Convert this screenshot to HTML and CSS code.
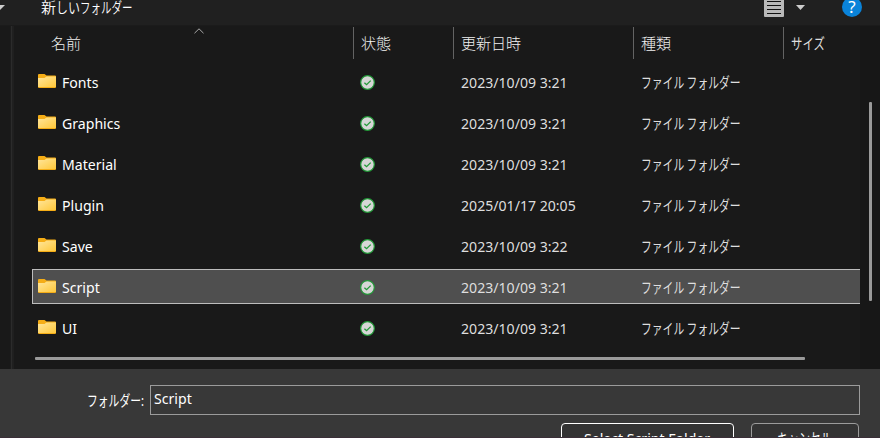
FILE: index.html
```html
<!DOCTYPE html>
<html lang="ja">
<head>
<meta charset="utf-8">
<title>フォルダー</title>
<link rel="stylesheet" href="styles.css">
</head>
<body>
<svg width="0" height="0" class="defs">
  <defs>
    <linearGradient id="fold" x1="0" y1="0" x2="1" y2="1"><stop offset="0" stop-color="#ffe69c"/><stop offset="1" stop-color="#ffc83a"/></linearGradient>
    <symbol id="folder" viewBox="0 0 18 14">
      <path d="M0 1Q0 0 1 0H6.5L8.5 1.5H17Q18 1.5 18 2.5V13Q18 14 17 14H1Q0 14 0 13Z" fill="#f5ad16"/>
      <path d="M0 4H6.5L8.5 2.4H18V13H0Z" fill="url(#fold)"/>
    </symbol>
    <symbol id="check" viewBox="0 0 15 15">
      <circle cx="7.5" cy="7.5" r="6.8" fill="#d6d6d6" stroke="#229a38" stroke-width="1.2"/>
      <path d="M4.4 7.7L6.6 9.7L10.7 5.6" fill="none" stroke="#229a38" stroke-width="1.3"/>
    </symbol>
  </defs>
</svg>
<div class="dialog">
  <header class="toolbar">
    <svg class="organize" width="5" height="5" viewBox="0 0 5 5"><path d="M-4 0H5L0 5Z" fill="#ccc"/></svg>
    <div class="new"><span>新</span><span class="t hira">しい</span><span class="t kana">フォルダー</span></div>
    <svg class="view" width="20" height="17" viewBox="0 0 20 17"><path d="M0 0H20V16Q20 17 19 17H1Q0 17 0 16Z" fill="#b9b9b9"/><path d="M3 1.5H17M3 5.5H17M3 9.5H17M3 13.5H17" stroke="#111"/></svg>
    <svg class="drop" width="9" height="5" viewBox="0 0 9 5"><path d="M0 0H9L4.5 5Z" fill="#ccc"/></svg>
    <div class="help"><span>?</span></div>
  </header>
  <main class="browser">
    <div class="splitter"></div>
    <div class="list">
      <div class="head">
        <div class="col name"><span>名前</span><svg class="sort" width="10" height="6" viewBox="0 0 10 6"><path d="M.5 5.2L5 .8L9.5 5.2" fill="none" stroke="#aaa"/></svg></div>
        <div class="col state"><span>状態</span></div>
        <div class="col date"><span>更新日時</span></div>
        <div class="col kind"><span>種類</span></div>
        <div class="col size"><span class="t size-label">サイズ</span></div>
      </div>
      <div class="rows">
        <div class="row"><svg class="folder"><use href="#folder"/></svg><span class="label"><span class="t latin">Fonts</span></span><svg class="check"><use href="#check"/></svg><span class="when"><span class="t latin">2023/10/09 3:21</span></span><span class="t type">ファイル フォルダー</span></div>
        <div class="row"><svg class="folder"><use href="#folder"/></svg><span class="label"><span class="t latin">Graphics</span></span><svg class="check"><use href="#check"/></svg><span class="when"><span class="t latin">2023/10/09 3:21</span></span><span class="t type">ファイル フォルダー</span></div>
        <div class="row"><svg class="folder"><use href="#folder"/></svg><span class="label"><span class="t latin">Material</span></span><svg class="check"><use href="#check"/></svg><span class="when"><span class="t latin">2023/10/09 3:21</span></span><span class="t type">ファイル フォルダー</span></div>
        <div class="row"><svg class="folder"><use href="#folder"/></svg><span class="label"><span class="t latin">Plugin</span></span><svg class="check"><use href="#check"/></svg><span class="when"><span class="t latin">2025/01/17 20:05</span></span><span class="t type">ファイル フォルダー</span></div>
        <div class="row"><svg class="folder"><use href="#folder"/></svg><span class="label"><span class="t latin">Save</span></span><svg class="check"><use href="#check"/></svg><span class="when"><span class="t latin">2023/10/09 3:22</span></span><span class="t type">ファイル フォルダー</span></div>
        <div class="row selected"><svg class="folder"><use href="#folder"/></svg><span class="label"><span class="t latin">Script</span></span><svg class="check"><use href="#check"/></svg><span class="when"><span class="t latin">2023/10/09 3:21</span></span><span class="t type">ファイル フォルダー</span></div>
        <div class="row"><svg class="folder"><use href="#folder"/></svg><span class="label"><span class="t latin">UI</span></span><svg class="check"><use href="#check"/></svg><span class="when"><span class="t latin">2023/10/09 3:21</span></span><span class="t type">ファイル フォルダー</span></div>
      </div>
      <div class="hscroll"><div class="thumb"></div></div>
    </div>
    <div class="vscroll"><div class="thumb"></div></div>
  </main>
  <footer class="footer">
    <div class="field"><label><span class="t kana">フォルダー:</span></label><div class="input"><span class="t latin">Script</span></div></div>
    <div class="buttons">
      <div class="btn primary"><span class="t select">Select Script Folder</span></div>
      <div class="btn"><span class="t cancel">キャンセル</span></div>
    </div>
  </footer>
</div>
</body>
</html>
```
FILE: styles.css
```css
* { box-sizing: border-box; }
body { margin: 0; overflow: hidden; background: #383838; color: #fff; font: 15px/20px "Noto Sans", "Noto Sans CJK JP", sans-serif; }
svg { display: block; flex: none; }
.defs { position: absolute; }
.dialog { width: 880px; height: 438px; overflow: hidden; display: flex; flex-direction: column; }
.t { display: inline-block; white-space: nowrap; transform-origin: 0 50%; }
.latin { transform: scaleX(.94); }
.kana { transform: scaleX(.7); }
.hira { transform: scaleX(.8); width: 24px; }

.toolbar { height: 26px; flex: none; background: #202020; display: flex; align-items: flex-start; border-bottom: 1px solid #1b1b1b; }
.organize { margin-top: 5px; }
.new { margin: -3px 0 0 36px; width: 723px; white-space: nowrap; display: flex; font-family: "Noto Sans CJK JP", sans-serif; font-weight: 350; }
.drop { margin: 5px 0 0 12px; }
.help { margin: -3px 0 0 37px; width: 20px; height: 20px; border-radius: 50%; background: #0a83d9; display: flex; justify-content: center; font: 17px/20px "Noto Sans", sans-serif; }

.browser { height: 343px; flex: none; display: flex; background: #191919; }
.splitter { width: 4px; margin-left: 10px; background: #202020; border-left: 1px solid #1c1c1c; border-right: 1px solid #1f1f1f; box-shadow: inset 1px 0 #2b2b2b; }
.list { width: 846px; }
.head { display: flex; height: 34px; padding: 1px 0 0 30px; color: #f0f0f0; font-family: "Noto Sans CJK JP", sans-serif; font-weight: 300; }
.col { position: relative; height: 32px; padding: 6px 0 0 7px; border-left: 1px solid #636363; white-space: nowrap; }
.name { width: 309px; border: 0; }
.sort { position: absolute; left: 150px; top: 1px; }
.state { width: 100px; }
.date { width: 180px; }
.kind { width: 150px; }
.size { width: 77px; }
.size-label { transform: scaleX(.76); font-weight: 400; color: #dedede; }
.rows { display: flex; flex-direction: column; gap: 6px; margin: 4px 0 0 18px; }
.row { height: 35px; width: 828px; padding: 0 0 0 5px; border: 1px solid transparent; border-right: 0; display: flex; align-items: center; }
.selected { background: #4f4f4f; border-color: #bdbdbd; }
.folder { width: 18px; height: 14px; margin: -1px 6px 0 0; }
.label { width: 298px; }
.check { width: 15px; height: 15px; margin-top: 2px; }
.when { width: 180px; margin-left: 86px; color: #dedede; }
.type { width: 140px; color: #dedede; font-family: "Noto Sans CJK JP", sans-serif; transform: scaleX(.72); font-weight: 400; }
.hscroll { height: 20px; padding: 12px 0 0 21px; }
.hscroll .thumb { width: 770px; height: 3px; border-radius: 1px; background: #9a9a9a; }
.vscroll { width: 20px; padding: 76px 0 0 9px; background: #171717; }
.vscroll .thumb { width: 3px; height: 199px; border-radius: 1px; background: #9a9a9a; }

.footer { height: 69px; flex: none; overflow: hidden; background: #383838; padding-top: 16px; border-bottom: 1px solid #3b2f38; }
.field { display: flex; height: 30px; }
.field label { width: 150px; padding: 5px 0 0 87px; font-family: "Noto Sans CJK JP", sans-serif; }
.field .kana { transform: scaleX(.72); }
.input { width: 710px; border: 1px solid #9b9b9b; padding: 2px 0 0 3px; }
.buttons { display: flex; gap: 17px; margin: 8px 0 0 561px; }
.btn { height: 32px; width: 108px; border: 1px solid #9b9b9b; border-radius: 4px; background: #333; padding: 4px 0 0 25px; }
.btn.primary { width: 173px; border-color: #fff; padding-left: 22px; }
.select { transform: scaleX(.94); }
.cancel { transform: scaleX(.73); font-family: "Noto Sans CJK JP", sans-serif; }
```
